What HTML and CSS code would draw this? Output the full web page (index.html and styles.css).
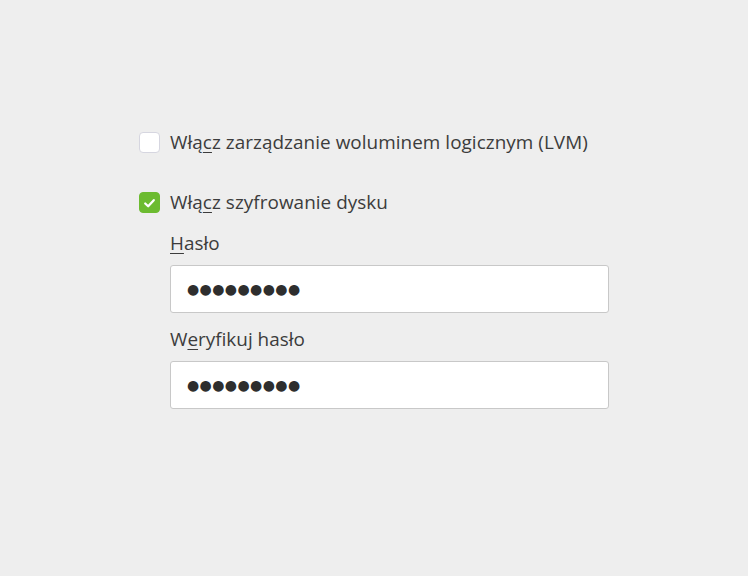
FILE: index.html
```html
<!DOCTYPE html>
<html lang="pl">
<head>
<meta charset="utf-8">
<link rel="stylesheet" href="styles.css">
</head>
<body>
<div class="page">
  <div class="form">
    <label class="check">
      <span class="box"></span>
      <span class="text">Włą<u>c</u>z zarządzanie woluminem logicznym (LVM)</span>
    </label>
    <label class="check second">
      <span class="box on"><svg viewBox="0 0 20 20" width="20" height="20"><path d="M5.5 10.5 L8.6 13.4 L14.5 7" fill="none" stroke="#fff" stroke-width="2.4" stroke-linecap="round" stroke-linejoin="round"/></svg></span>
      <span class="text">Włą<u>c</u>z szyfrowanie dysku</span>
    </label>
    <div class="fields">
      <div class="label"><u>H</u>asło</div>
      <div class="input"><span class="dots">●●●●●●●●●</span></div>
      <div class="label second-label">W<u>e</u>ryfikuj hasło</div>
      <div class="input"><span class="dots">●●●●●●●●●</span></div>
    </div>
  </div>
</div>
</body>
</html>
```
FILE: styles.css
```css
html, body {
  margin: 0;
  padding: 0;
  background: #eeeeee;
}
.page {
  width: 748px;
  height: 576px;
  box-sizing: border-box;
  padding: 132px 0 0 139px;
  font-family: "Open Sans", "Lato", sans-serif;
  color: #3c3c3c;
}
.form {
  display: flex;
  flex-direction: column;
}
.check {
  display: flex;
  align-items: center;
  gap: 10px;
  height: 21px;
}
.check.second {
  margin-top: 39px;
}
.box {
  width: 19px;
  height: 19px;
  border: 1px solid #d6d6e0;
  border-radius: 4px;
  background: #ffffff;
  display: flex;
  align-items: center;
  justify-content: center;
}
.box.on {
  background: #6cbb30;
  border-color: #6cbb30;
}
.text {
  font-size: 18.9px;
  line-height: 21px;
  letter-spacing: 0.05px;
}
u {
  text-decoration-thickness: 1px;
  text-underline-offset: 3px;
}
.fields {
  margin-left: 31px;
  display: flex;
  flex-direction: column;
  width: 439px;
}
.label {
  font-size: 18.9px;
  line-height: 22px;
  margin-top: 19px;
  margin-bottom: 11px;
}
.second-label {
  margin-top: 15px;
}
.input {
  height: 48px;
  box-sizing: border-box;
  border: 1px solid #c8c8c8;
  border-radius: 3px;
  background: #ffffff;
  display: flex;
  align-items: center;
  padding-left: 16px;
}
.dots {
  font-family: "DejaVu Sans", sans-serif;
  font-size: 14px;
  letter-spacing: 0.4px;
  color: #2e2e2e;
}
```
